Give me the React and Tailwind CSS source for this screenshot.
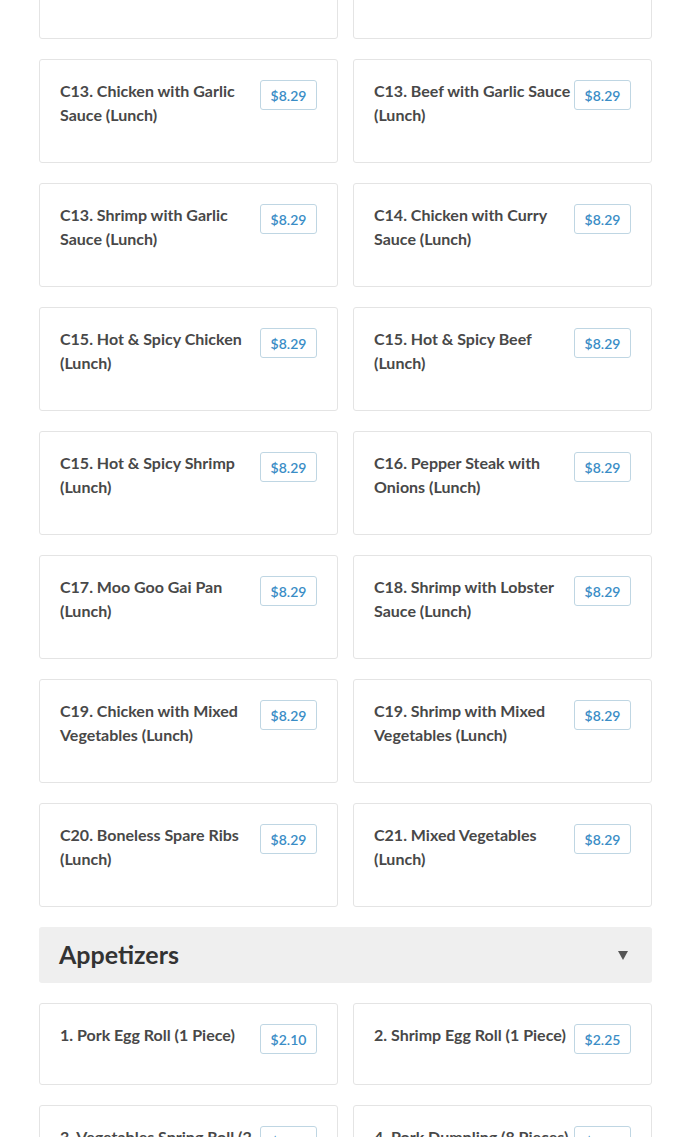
import React from 'react';

const lunch = [
  ['C12. Roast Pork Lo Mein', '$8.29', 'C12. Beef with Broccoli (Lunch)', '$8.29'],
  ['C13. Chicken with Garlic Sauce (Lunch)', '$8.29', 'C13. Beef with Garlic Sauce (Lunch)', '$8.29'],
  ['C13. Shrimp with Garlic Sauce (Lunch)', '$8.29', 'C14. Chicken with Curry Sauce (Lunch)', '$8.29'],
  ['C15. Hot & Spicy Chicken (Lunch)', '$8.29', 'C15. Hot & Spicy Beef (Lunch)', '$8.29'],
  ['C15. Hot & Spicy Shrimp (Lunch)', '$8.29', 'C16. Pepper Steak with Onions (Lunch)', '$8.29'],
  ['C17. Moo Goo Gai Pan (Lunch)', '$8.29', 'C18. Shrimp with Lobster Sauce (Lunch)', '$8.29'],
  ['C19. Chicken with Mixed Vegetables (Lunch)', '$8.29', 'C19. Shrimp with Mixed Vegetables (Lunch)', '$8.29'],
  ['C20. Boneless Spare Ribs (Lunch)', '$8.29', 'C21. Mixed Vegetables (Lunch)', '$8.29'],
];

const appetizers = [
  ['1. Pork Egg Roll (1 Piece)', '$2.10', '2. Shrimp Egg Roll (1 Piece)', '$2.25'],
  ['3. Vegetables Spring Roll (2 Pieces)', '$2.50', '4. Pork Dumpling (8 Pieces)', '$6.95'],
];

function Item({ name, price }) {
  return (
    <div className="border border-[#e4e4e4] rounded-[3px] bg-white pt-5 pb-[30px] px-5 flex items-start gap-[1px]">
      <div className="flex-1 min-w-0 text-[16px] leading-[24px] font-bold text-[#484848] mt-[-1px] mb-[5px]">{name}</div>
      <div className="shrink-0 h-[30px] w-[57px] flex items-center justify-center border border-[#bfd6e3] rounded-[3px] text-[14px] font-semibold text-[#3a8dc6]">
        {price}
      </div>
    </div>
  );
}

function Rows({ rows }) {
  return (
    <div className="grid grid-cols-2 gap-x-[15px] gap-y-5">
      {rows.map((r, i) => (
        <React.Fragment key={i}>
          <Item name={r[0]} price={r[1]} />
          <Item name={r[2]} price={r[3]} />
        </React.Fragment>
      ))}
    </div>
  );
}

export default function App() {
  return (
    <div className="h-[1137px] overflow-hidden bg-white" style={{ fontFamily: 'Lato, "Open Sans", sans-serif' }}>
      <div className="ml-[39px] w-[613px] mt-[-65px] flex flex-col gap-5">
        <Rows rows={lunch} />

        {/* section header */}
        <div className="h-[56px] bg-[#efefef] rounded-[3px] pl-5 pr-6 flex items-center justify-between">
          <h2 className="text-[25px] font-bold text-[#333]">Appetizers</h2>
          <svg width="10" height="9" viewBox="0 0 10 9">
            <path d="M0 0 H10 L5 9 Z" fill="#555" />
          </svg>
        </div>

        <Rows rows={appetizers} />
      </div>
    </div>
  );
}
